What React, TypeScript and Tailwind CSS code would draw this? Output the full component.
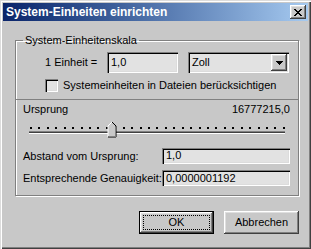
import React from 'react';

// Win2000-style bevels
const raised =
  'shadow-[inset_-1px_-1px_#404040,inset_1px_1px_#ffffff,inset_-2px_-2px_#808080,inset_2px_2px_#dfdfdf]';
const sunken =
  'shadow-[inset_1px_1px_#808080,inset_2px_2px_#000000,inset_-1px_-1px_#ffffff,inset_-2px_-2px_#dcdcdc]';

function CloseButton() {
  return (
    <div className={`w-[16px] h-[14px] bg-[#c8c8c8] flex items-center justify-center ${raised}`}>
      <svg width="8" height="7" viewBox="0 0 8 7" shapeRendering="crispEdges">
        <path d="M0 0h2v1h-2zM6 0h2v1h-2zM1 1h2v1h-2zM5 1h2v1h-2zM2 2h4v1h-4zM3 3h2v1h-2zM2 4h4v1h-4zM1 5h2v1h-2zM5 5h2v1h-2zM0 6h2v1h-2zM6 6h2v1h-2z" fill="#000" />
      </svg>
    </div>
  );
}

function Field({ value, className }: { value: string; className: string }) {
  return (
    <div className={`bg-[#e2e2e2] flex items-center pl-[4px] ${sunken} ${className}`}>
      <span className="leading-none">{value}</span>
    </div>
  );
}

function Slider() {
  const dots = Array.from({ length: 31 }, (_, i) => 7 + i * 8.43);
  return (
    <svg width="267" height="17" viewBox="0 0 267 17" shapeRendering="crispEdges" className="block">
      {dots.map((x, i) => (
        <rect key={i} x={Math.round(x)} y="6" width="2" height="2" fill="#000" />
      ))}
      {/* track */}
      <rect x="6" y="10" width="256" height="1" fill="#808080" />
      <rect x="6" y="11" width="256" height="1" fill="#404040" />
      <rect x="6" y="12" width="256" height="1" fill="#ffffff" />
      {/* thumb */}
      <polygon points="85,5 89,1 93,5 93,16 85,16" fill="#c8c8c8" />
      <path d="M85 5v11M85 5l4-4" stroke="#ffffff" strokeWidth="1" fill="none" shapeRendering="auto" />
      <path d="M89 1l4 4v11h-8" stroke="#000000" strokeWidth="1" fill="none" shapeRendering="auto" />
      <path d="M92 6v9h-6" stroke="#808080" strokeWidth="1" fill="none" />
    </svg>
  );
}

export default function App() {
  return (
    <div
      className="w-[311px] h-[249px] bg-[#c8c8c8] p-[3px] flex flex-col text-[11px] text-black shadow-[inset_1px_1px_#dcdcdc,inset_2px_2px_#ffffff,inset_-1px_-1px_#404040,inset_-2px_-2px_#808080]"
      style={{ fontFamily: '"Liberation Sans", Arial, sans-serif' }}
    >
      {/* Title bar */}
      <div className="h-[18px] flex items-center justify-between pl-[3px] pr-[2px] bg-gradient-to-r from-[#0a246a] to-[#a6caf0]">
        <span className="text-white font-bold text-[12px] leading-none">System-Einheiten einrichten</span>
        <CloseButton />
      </div>

      {/* Group */}
      <fieldset className="mt-[13px] ml-[12px] w-[284px] border border-[#808080] shadow-[inset_1px_1px_#ffffff,1px_1px_#ffffff] pb-[8px]">
        <legend className="ml-[7px] px-[2px] leading-[13px]">System-Einheitenskala</legend>

        <div className="pl-[29px] pr-[8px] pt-[5px]">
          <div className="flex items-center">
            <span className="w-[62px]">1 Einheit =</span>
            <Field value="1,0" className="w-[71px] h-[21px]" />
            <div className={`ml-[10px] w-[101px] h-[21px] bg-[#e2e2e2] flex items-center justify-between pl-[4px] pr-[2px] ${sunken}`}>
              <span className="leading-none">Zoll</span>
              <div className={`w-[16px] h-[17px] bg-[#c8c8c8] flex items-center justify-center ${raised}`}>
                <svg width="7" height="4" viewBox="0 0 7 4" shapeRendering="crispEdges">
                  <path d="M0 0h7v1h-7zM1 1h5v1h-5zM2 2h3v1h-3zM3 3h1v1h-1z" fill="#000" />
                </svg>
              </div>
            </div>
          </div>
          <div className="flex items-center mt-[4px]">
            <div className={`w-[13px] h-[13px] bg-[#e2e2e2] ${sunken}`} />
            <span className="ml-[5px]">Systemeinheiten in Dateien berücksichtigen</span>
          </div>
        </div>

        <div className="mt-[5px] border-t border-[#808080] shadow-[inset_0_1px_#ffffff]" />

        <div className="pl-[7px] pr-[8px] pt-[3px]">
          <div className="flex justify-between leading-[13px]">
            <span>Ursprung</span>
            <span>16777215,0</span>
          </div>
          <div className="mt-[5px]">
            <Slider />
          </div>
          <div className="flex items-center justify-between mt-[10px]">
            <span>Abstand vom Ursprung:</span>
            <Field value="1,0" className="w-[128px] h-[16px]" />
          </div>
          <div className="flex items-center justify-between mt-[6px]">
            <span>Entsprechende Genauigkeit:</span>
            <Field value="0,0000001192" className="w-[128px] h-[16px]" />
          </div>
        </div>
      </fieldset>

      {/* Buttons */}
      <div className="flex justify-end gap-[10px] pr-[9px] mt-[15px]">
        <button className="w-[75px] h-[23px] border border-black bg-[#c8c8c8] p-0">
          <div className={`w-full h-full flex items-center justify-center p-[3px] ${raised}`}>
            <div className="w-full h-full border border-dotted border-black flex items-center justify-center leading-none">
              OK
            </div>
          </div>
        </button>
        <button className={`w-[75px] h-[23px] bg-[#c8c8c8] flex items-center justify-center leading-none ${raised}`}>
          Abbrechen
        </button>
      </div>
    </div>
  );
}
